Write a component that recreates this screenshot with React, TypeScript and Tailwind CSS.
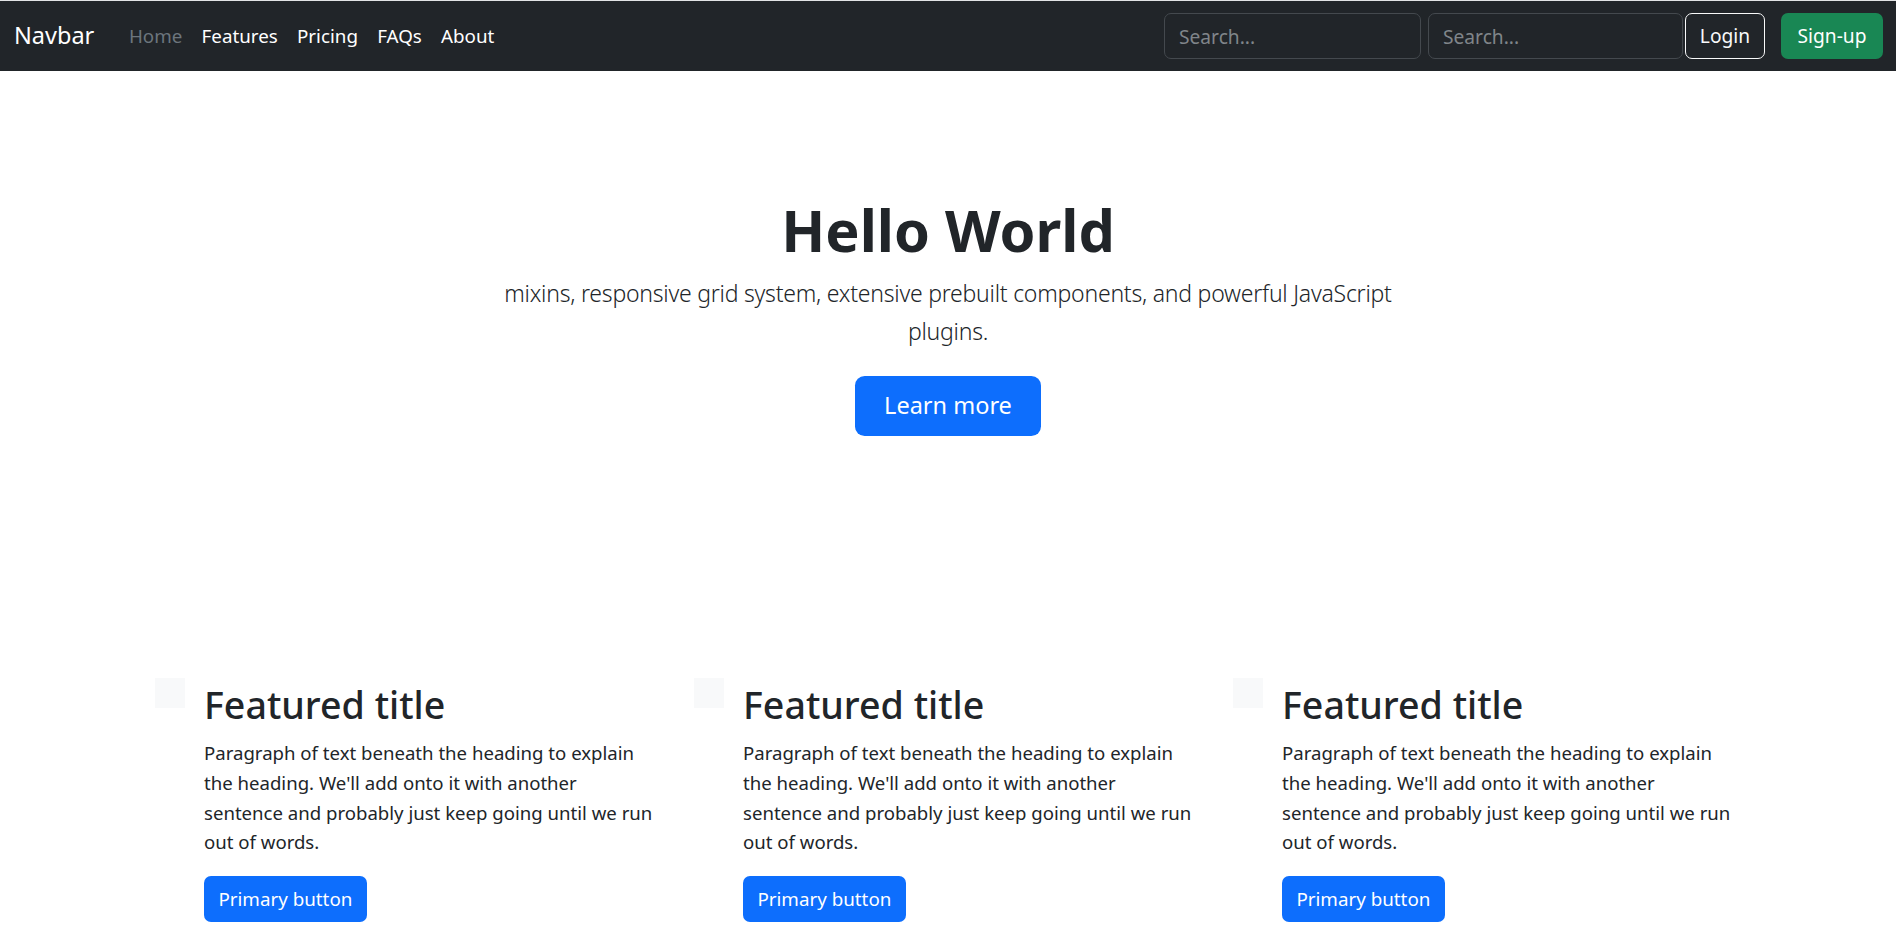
const links = ["Home", "Features", "Pricing", "FAQs", "About"];

function Feature() {
  return (
    <div className="flex items-start">
      <div className="w-[30px] h-[30px] bg-[#f8f9fa] shrink-0 mr-[19px]" />
      <div className="w-[452px] pt-[4px]">
        <h2 className="text-[37.6px] font-medium leading-[1.2] mb-[11px]">Featured title</h2>
        <p className="text-[18.6px] leading-[29.7px] mb-[19px]">
          Paragraph of text beneath the heading to explain the heading. We'll add onto it with another
          sentence and probably just keep going until we run out of words.
        </p>
        <a
          href="#"
          className="inline-flex items-center h-[46px] px-[14.4px] rounded-[7px] bg-[#0d6efd] text-white text-[18.8px]"
        >
          Primary button
        </a>
      </div>
    </div>
  );
}

export default function App() {
  return (
    <div className="min-h-screen bg-white text-[#212529] font-['Segoe_UI','Noto_Sans',sans-serif]">
      <header className="h-[71px] bg-[#212529] border-t border-[#e2e3e5] flex items-center pl-[14px] pr-[13px]">
        <a href="#" className="text-[23.5px] text-white mr-[25px]">
          Navbar
        </a>
        <nav className="flex">
          {links.map((l, i) => (
            <a
              key={l}
              href="#"
              className={`px-[9.6px] text-[18.8px] ${i === 0 ? "text-[#6c757d]" : "text-white"}`}
            >
              {l}
            </a>
          ))}
        </nav>
        <div className="ml-auto flex items-center">
          <input
            placeholder="Search..."
            className="w-[257px] h-[46px] px-[14px] rounded-[7px] border border-[#44494e] bg-[#212529] text-[19.2px] text-white placeholder:text-[#80858a] outline-none"
          />
          <input
            placeholder="Search..."
            className="ml-[7px] w-[255px] h-[46px] px-[14px] rounded-[7px] border border-[#44494e] bg-[#212529] text-[19.2px] text-white placeholder:text-[#80858a] outline-none"
          />
          <button className="ml-[2px] w-[80px] h-[46px] rounded-[7px] border border-[#f8f9fa] text-[#f8f9fa] text-[19.2px]">
            Login
          </button>
          <button className="ml-[16px] w-[102px] h-[46px] rounded-[7px] bg-[#198754] text-white text-[19.2px]">
            Sign-up
          </button>
        </div>
      </header>

      <section className="pt-[124px] text-center">
        <h1 className="text-[57.6px] font-bold leading-[1.2] mb-[10px]">Hello World</h1>
        <p className="w-[919px] mx-auto text-[23px] tracking-[-0.01em] font-light leading-[38px] mb-[26px]">
          mixins, responsive grid system, extensive prebuilt components, and powerful JavaScript plugins.
        </p>
        <button className="h-[60px] px-[28.8px] rounded-[9.6px] bg-[#0d6efd] text-white text-[23.5px]">
          Learn more
        </button>
      </section>

      <section className="w-[1586px] mx-auto mt-[242px] grid grid-cols-3 gap-x-[31px] pb-[20px]">
        <Feature />
        <Feature />
        <Feature />
      </section>
    </div>
  );
}
